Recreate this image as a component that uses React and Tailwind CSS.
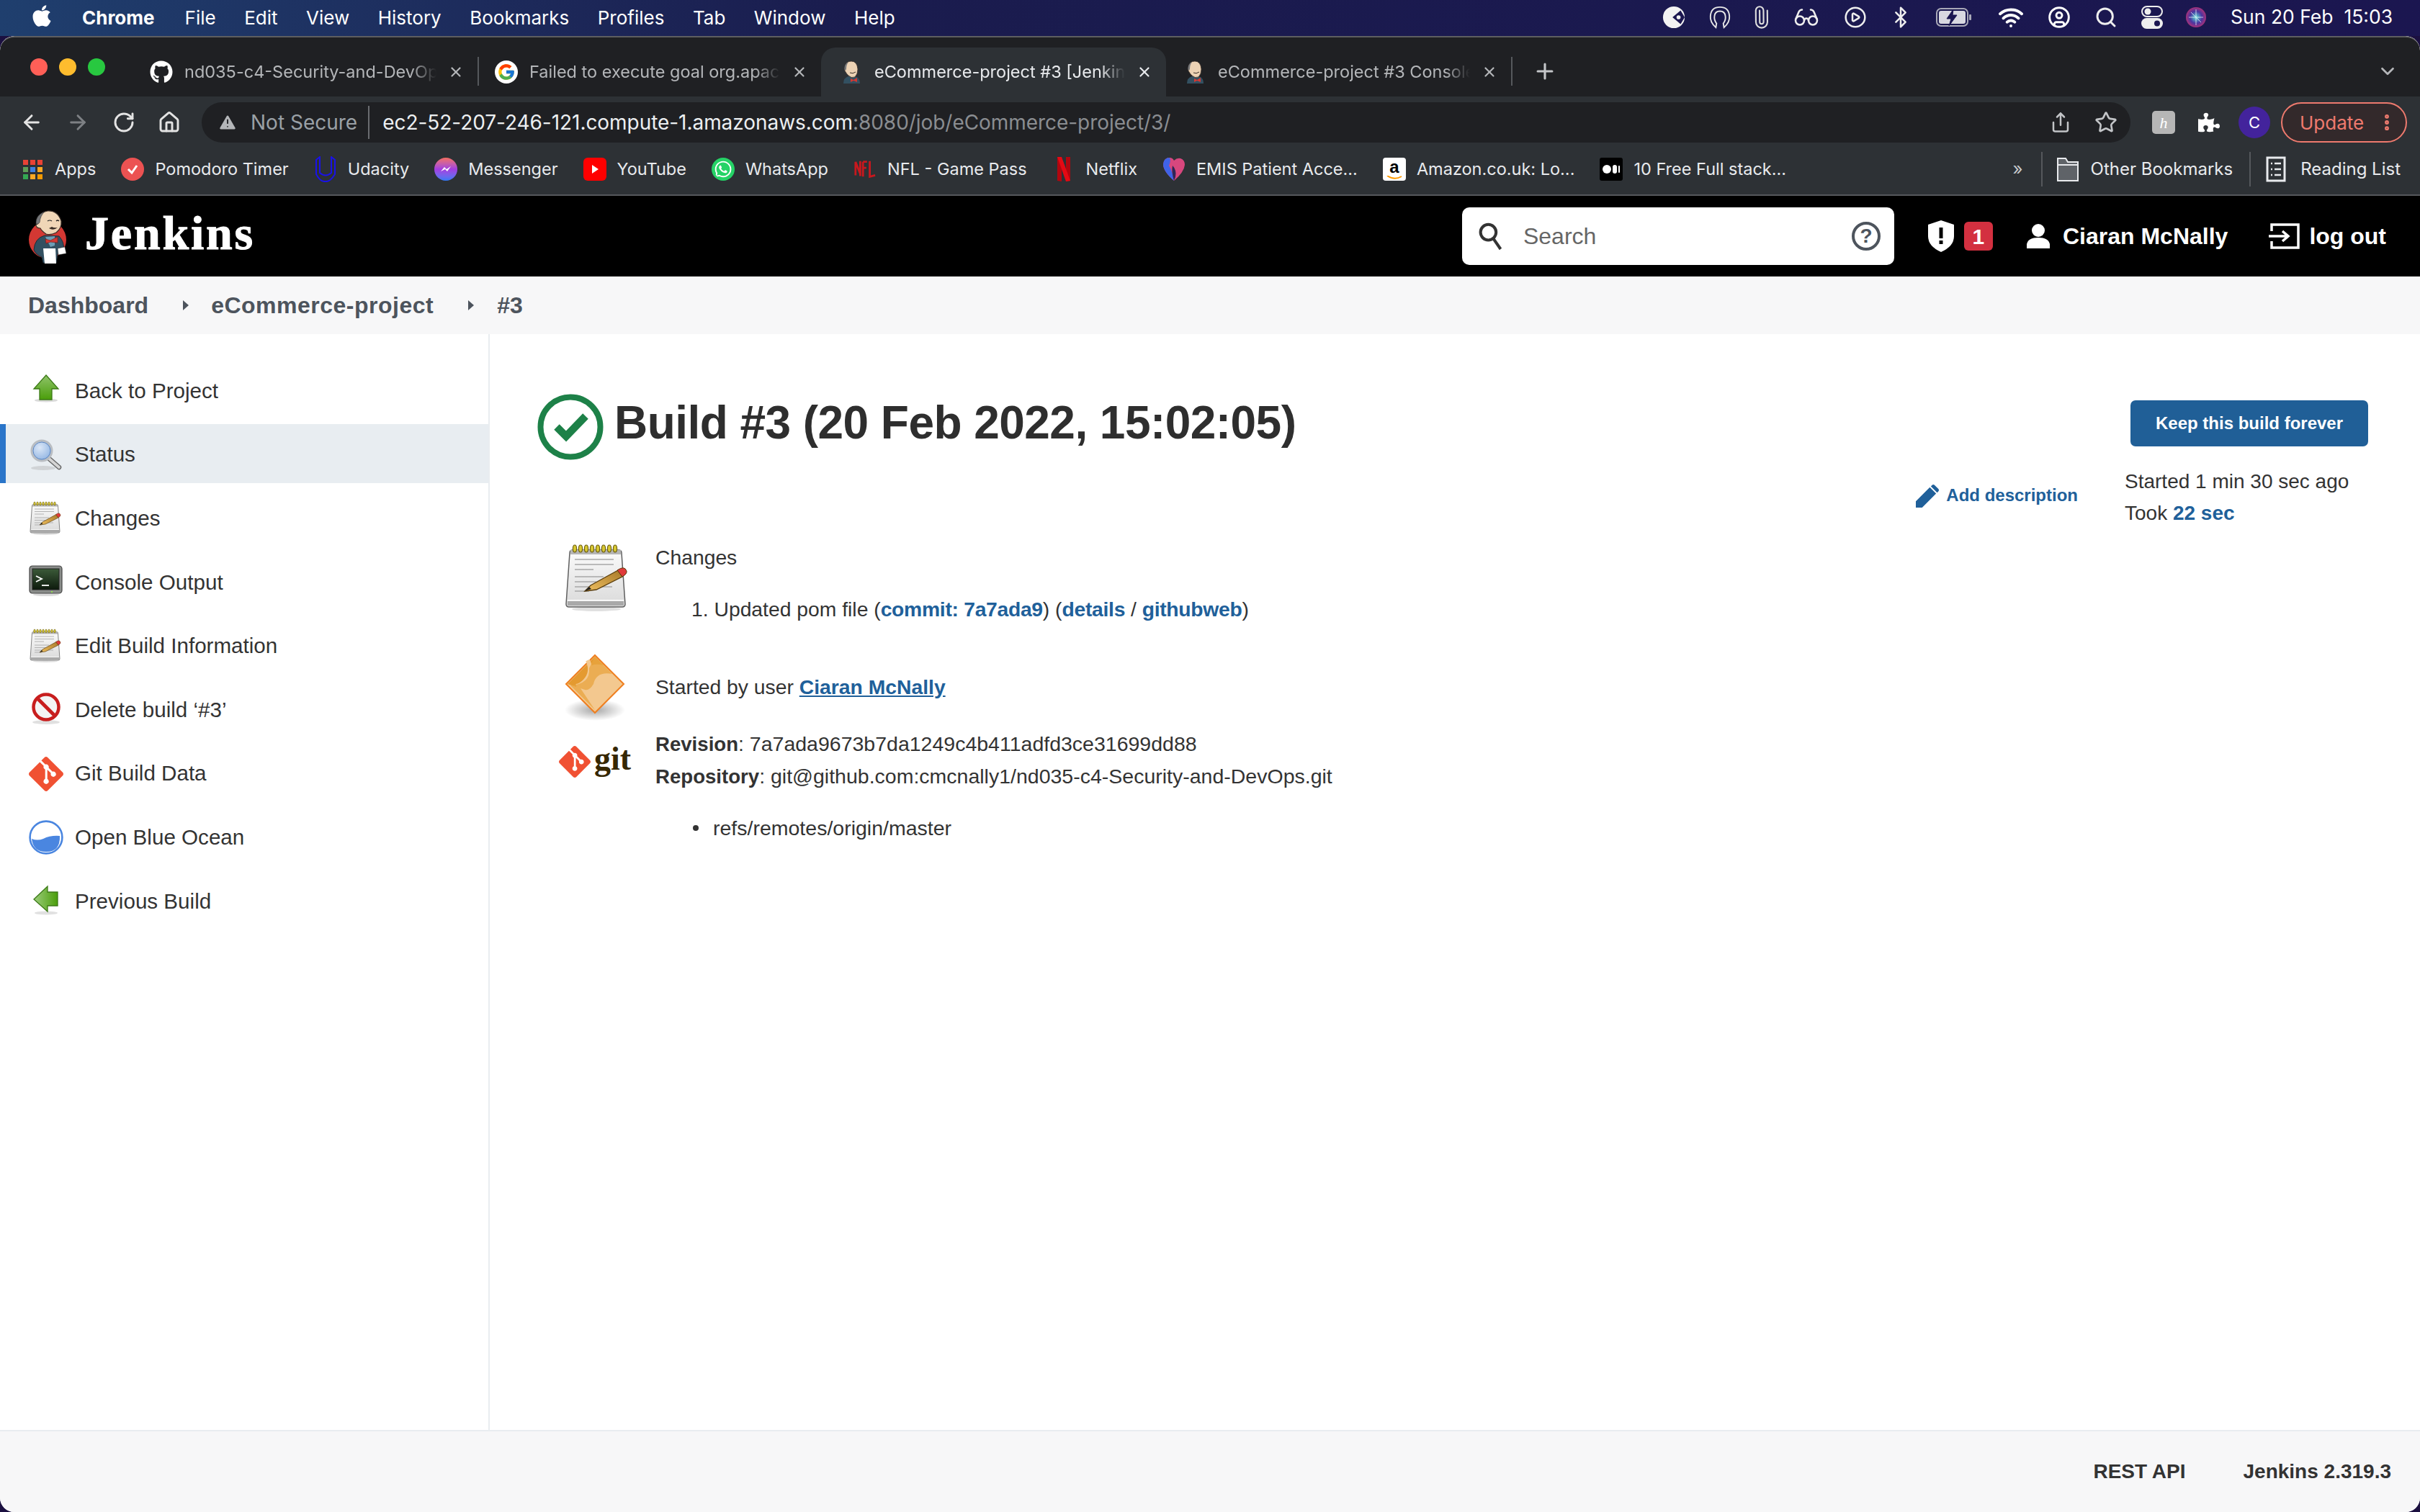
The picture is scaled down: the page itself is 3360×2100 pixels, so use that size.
import React from 'react';
import { FaApple, FaGithub, FaWhatsapp, FaPuzzlePiece } from 'react-icons/fa';
import { FcGoogle } from 'react-icons/fc';
import { SiGit } from 'react-icons/si';
import { ArrowLeft, ArrowRight, RotateCw, House, Paperclip, Glasses, CirclePlay, Bluetooth, Wifi, CircleUser, Search, Share, Star, ChevronDown, Plus, X, TriangleAlert, EllipsisVertical } from 'lucide-react';

function Butler({ className }) {
  return (
    <svg viewBox="0 0 100 95" className={className}>
      <circle cx="46" cy="52" r="26" fill="#d33833" />
      <path d="M27 66 Q28 50 42 46 L62 47 Q70 56 68 66 L60 72 L58 84 L40 84 L38 76 Q30 73 27 66Z" fill="#335061" stroke="#1d2d38" strokeWidth="1" />
      <path d="M43 48 L56 47 L56 60 L50 62 Z" fill="#6d9db5" />
      <path d="M43 51 L50 53 L60 48 L60 56 L50 55 L44 57 Z" fill="#d33833" stroke="#7a1c1a" strokeWidth=".7" />
      <path d="M40 64 H57 L58 85 H42 Z" fill="#ffffff" />
      <path d="M60 64 L70 62 L72 71 L61 73Z" fill="#ffffff" stroke="#222" strokeWidth=".5" />
      <path d="M32 30 Q33 14 46 12 Q60 11 65 26 Q66 36 58 42 Q50 46 44 44 Q38 40 36 36 Q30 36 30 31Z" fill="#f0d6b7" stroke="#3a2f28" strokeWidth="1.2" />
      <path d="M30 30 Q29 18 42 13 Q36 18 35 28 L33 30Z" fill="#77787a" stroke="#333" strokeWidth=".6" />
      <path d="M46 26 Q49 24 52 26 M58 26 Q60 24 62 26" stroke="#222" strokeWidth="1.2" fill="none" />
      <path d="M48 36 Q54 40 60 35 Q55 36 52 34 Z" fill="#3a2f28" />
    </svg>
  );
}

function SmallButler() {
  return (
    <svg viewBox="0 0 32 32" className="w-8 h-8 shrink-0">
      <path d="M5 32 Q5 24 12 22 L24 23 Q28 26 28 32Z" fill="#335061" />
      <path d="M15 25 L19 27 L24 24 L24 30 L19 28 L15 30Z" fill="#d33833" />
      <path d="M7 10 Q8 1 16 1 Q24 1 25 12 Q25 19 21 23 Q16 25 12 21 Q9 18 8 16 Q6 14 7 10Z" fill="#ecd2b4" stroke="#3a2f28" strokeWidth=".8" />
      <path d="M6.5 12 Q6 5 12 2 Q9 6 9 12 L8 14Z" fill="#77787a" />
      <path d="M14 17 Q18 19 22 16" stroke="#3a2f28" strokeWidth="1" fill="none" />
    </svg>
  );
}

function Notepad({ className }) {
  const rings = [16, 24, 32, 40, 48, 56, 64, 72];
  return (
    <svg viewBox="0 0 96 96" className={className}>
      <defs>
        <linearGradient id="np" x1="0" y1="0" x2="0" y2="1"><stop offset="0" stopColor="#fbfbfb" /><stop offset="1" stopColor="#d9d9d9" /></linearGradient>
        <linearGradient id="pn" x1="0" y1="1" x2="1" y2="0"><stop offset="0" stopColor="#f0c060" /><stop offset="1" stopColor="#a87a2a" /></linearGradient>
      </defs>
      <ellipse cx="46" cy="91" rx="34" ry="3" fill="#999" opacity=".3" />
      <path d="M13 9 H77 Q81 9 81 13 L86 84 Q86 88 82 88 H8 Q4 88 4 84 L9 13 Q9 9 13 9Z" fill="url(#np)" stroke="#5f5f5f" strokeWidth="1.5" />
      <rect x="10" y="9" width="70" height="6" fill="#b5b5b5" />
      <rect x="6" y="80" width="78" height="6" fill="#a9a9a9" />
      <rect x="6" y="78" width="78" height="1.5" fill="#ffffff" />
      {rings.map((x) => <ellipse key={x} cx={x} cy="7" rx="2.6" ry="5" fill="#d8c832" stroke="#6d5f10" strokeWidth="1.2" />)}
      <g stroke="#a8a8a8" strokeWidth="1.7">
        <path d="M16 22 H70 M16 29 H70 M16 36 H42 M16 46 H56 M16 53 H46 M16 60 H68 M16 66 H36" />
      </g>
      <path d="M30 66 L38 58 L76 37 L82 46 L46 64 Z" fill="url(#pn)" stroke="#5a3d0c" strokeWidth="1.3" />
      <path d="M75 37 Q85 30 88 38 Q89 42 82 46 Z" fill="#e03a3a" stroke="#5a3d0c" strokeWidth="1" />
      <path d="M30 66 L36 60 L39 63Z" fill="#222" />
    </svg>
  );
}

function UpArrow() {
  return (
    <svg viewBox="0 0 48 48" className="w-12 h-12">
      <defs><linearGradient id="ga" x1="0" y1="0" x2="0" y2="1"><stop offset="0" stopColor="#8fc36a" /><stop offset="1" stopColor="#4a9e0a" /></linearGradient></defs>
      <ellipse cx="24" cy="37" rx="16" ry="2.5" fill="#888" opacity=".3" />
      <path d="M24 2 L41 21 H32 V36 H15 V21 H7 Z" fill="url(#ga)" stroke="#3c7a17" strokeWidth="1.3" />
    </svg>
  );
}
function LeftArrow() {
  return (
    <svg viewBox="0 0 48 48" className="w-12 h-12">
      <defs><linearGradient id="gb" x1="1" y1="0" x2="0" y2="0"><stop offset="0" stopColor="#4a9e0a" /><stop offset="1" stopColor="#9ccc7c" /></linearGradient></defs>
      <ellipse cx="24" cy="40" rx="16" ry="2.5" fill="#888" opacity=".25" />
      <path d="M7 21 L26 3 V11 H40 V30 H26 V38 Z" fill="url(#gb)" stroke="#3c7a17" strokeWidth="1.3" />
    </svg>
  );
}
function Magnifier() {
  return (
    <svg viewBox="0 0 48 48" className="w-12 h-12">
      <defs><radialGradient id="gl" cx=".4" cy=".35" r=".7"><stop offset="0" stopColor="#dbe7f7" /><stop offset="1" stopColor="#8db2e2" /></radialGradient></defs>
      <ellipse cx="20" cy="42" rx="17" ry="3" fill="#999" opacity=".3" />
      <path d="M27 28 L42 41" stroke="#666" strokeWidth="6.5" strokeLinecap="round" />
      <path d="M27 28 L42 41" stroke="#d5d5d5" strokeWidth="3.8" strokeLinecap="round" />
      <circle cx="18" cy="18" r="14" fill="url(#gl)" stroke="#b9bdc2" strokeWidth="3" />
      <circle cx="18" cy="18" r="12" fill="none" stroke="#5d86c0" strokeWidth="1" />
    </svg>
  );
}
function Terminal() {
  return (
    <svg viewBox="0 0 48 48" className="w-12 h-12">
      <defs><linearGradient id="gt" x1="0" y1="0" x2="0" y2="1"><stop offset="0" stopColor="#3b5a38" /><stop offset="1" stopColor="#0d1a0d" /></linearGradient></defs>
      <ellipse cx="24" cy="41" rx="18" ry="2" fill="#888" opacity=".3" />
      <rect x="1" y="1" width="45" height="38" rx="4" fill="#8a8d8a" stroke="#444" strokeWidth="1.2" />
      <rect x="5" y="5" width="37" height="29" fill="url(#gt)" stroke="#222" />
      <path d="M10 15 L18 19 L10 23" fill="none" stroke="#fff" strokeWidth="1.8" />
      <path d="M18 28 H28" stroke="#fff" strokeWidth="1.8" />
      <rect x="31" y="36" width="2" height="2" fill="#8fe04e" />
    </svg>
  );
}
function NoEntry() {
  return (
    <svg viewBox="0 0 48 48" className="w-12 h-12">
      <ellipse cx="24" cy="41" rx="19" ry="3" fill="#999" opacity=".3" />
      <circle cx="24" cy="20" r="17.5" fill="#f4f4f4" stroke="#c81e1e" strokeWidth="4.5" />
      <path d="M13 9 L35 31" stroke="#c81e1e" strokeWidth="5" />
    </svg>
  );
}
function Ocean() {
  return (
    <svg viewBox="0 0 48 48" className="w-12 h-12">
      <circle cx="24" cy="24" r="22.4" fill="#fff" stroke="#4a86e0" strokeWidth="2.6" />
      <path d="M4 26 Q12 29 20 26 Q30 21 43 22 Q44 44 24 44 Q6 44 4 26Z" fill="#4a86e0" />
    </svg>
  );
}
function OrangeDiamond() {
  return (
    <svg viewBox="0 0 96 96" className="w-24 h-24">
      <defs><radialGradient id="sh"><stop offset="0" stopColor="#777" stopOpacity=".65" /><stop offset="1" stopColor="#777" stopOpacity="0" /></radialGradient></defs>
      <ellipse cx="48" cy="80" rx="42" ry="15" fill="url(#sh)" />
      <path d="M48 4 L88 44 L48 84 L8 44Z" fill="#f3c88f" stroke="#ef7e1f" strokeWidth="2" />
      <path d="M48 6 L60 18 Q44 14 40 22 Q44 36 22 48 L10 44Z" fill="#e49a30" />
      <path d="M38 11 Q46 28 34 40 Q28 46 22 47" fill="none" stroke="#f3c88f" strokeWidth="6" />
      <path d="M48 6 L86 44 L72 30 Q50 26 46 44 Q40 54 34 52 L28 50 L48 80 L30 62 L14 46 Q42 44 40 22Z" fill="#e8a43f" opacity=".75" />
    </svg>
  );
}
function BuildCheck() {
  return (
    <svg viewBox="0 0 92 92" className="w-[92px] h-[92px] shrink-0">
      <circle cx="46" cy="46" r="41.5" fill="none" stroke="#1d8148" strokeWidth="8" />
      <path d="M27 46 L40 59 L67 31" fill="none" stroke="#1d8148" strokeWidth="10.5" strokeLinejoin="miter" />
    </svg>
  );
}

const page = "font-['Liberation_Sans',sans-serif]";
const chrome = "font-['Inter',sans-serif]";

const menuItems = ['File', 'Edit', 'View', 'History', 'Bookmarks', 'Profiles', 'Tab', 'Window', 'Help'];

function MI({ children, w }) {
  return <span className="h-[50px] flex items-center justify-center shrink-0" style={{ width: w }}>{children}</span>;
}

function MenuBar() {
  return (
    <div className={`${chrome} h-[50px] pb-[2px] shrink-0 flex items-center text-white text-[26px] bg-linear-to-r from-[#1f3f6e] via-[#1a1c4e] via-35% to-[#1b1650]`}>
      <FaApple className="ml-[42px] w-[32px] h-[34px] mb-1" />
      <span className="ml-[40px] font-bold">Chrome</span>
      <div className="flex gap-[39.5px] ml-[42px]">
        {menuItems.map((m) => <span key={m}>{m}</span>)}
      </div>
      <div className="ml-auto flex items-center">
        <MI w={70}><svg viewBox="0 0 34 34" className="w-8 h-8"><circle cx="17" cy="17" r="16" fill="#f2f2f2" /><path d="M27 7 L15 17 L27 27 L33 17Z" fill="#1b1650" /><circle cx="24" cy="17" r="3" fill="#f2f2f2" /></svg></MI>
        <MI w={58}><svg viewBox="0 0 34 34" className="w-8 h-8" fill="none" stroke="#e8e8e8" strokeWidth="2"><path d="M11 32 Q2 24 3 15 Q4 2 17 2 Q30 2 31 15 Q32 24 23 32 L22 26 Q26 21 25 15 Q24 8 17 8 Q10 8 9 15 Q8 21 12 26Z" /></svg></MI>
        <MI w={56}><Paperclip className="w-8 h-8 text-[#ddd] -rotate-45" strokeWidth={1.6} /></MI>
        <MI w={70}><Glasses className="w-9 h-9 text-[#eee]" strokeWidth={1.7} /></MI>
        <MI w={66}><CirclePlay className="w-8 h-8 text-[#eee]" strokeWidth={1.9} /></MI>
        <MI w={60}><Bluetooth className="w-8 h-8 text-[#eee]" strokeWidth={1.9} /></MI>
        <MI w={88}><svg viewBox="0 0 50 28" className="w-[50px] h-7"><rect x="1" y="2" width="43" height="24" rx="6" fill="none" stroke="#a9a9b8" strokeWidth="2" /><rect x="4" y="5" width="37" height="18" rx="3" fill="#d8d8e0" /><path d="M24 3 L15 16 H21 L18 26 L29 11 H23Z" fill="#1b1650" stroke="#1b1650" /><rect x="46" y="10" width="3" height="8" rx="1" fill="#a9a9b8" /></svg></MI>
        <MI w={70}><Wifi className="w-9 h-9 text-white" strokeWidth={2.6} /></MI>
        <MI w={64}><CircleUser className="w-8 h-8 text-white" strokeWidth={2.2} /></MI>
        <MI w={66}><Search className="w-8 h-8 text-[#eee]" strokeWidth={2.2} /></MI>
        <MI w={62}><svg viewBox="0 0 30 34" className="w-[30px] h-[34px]"><rect x="1" y="2" width="28" height="14" rx="7" fill="none" stroke="#eee" strokeWidth="2" /><circle cx="9" cy="9" r="4.5" fill="#eee" /><rect x="0" y="18" width="30" height="15" rx="7.5" fill="#eee" /><circle cx="22" cy="25.5" r="4" fill="#1b1650" /></svg></MI>
        <MI w={60}><svg viewBox="0 0 30 30" className="w-[30px] h-[34px]"><defs><radialGradient id="sr"><stop offset="0" stopColor="#5ce0d8" /><stop offset=".6" stopColor="#4a35a0" /><stop offset="1" stopColor="#a8327a" /></radialGradient></defs><circle cx="15" cy="15" r="14" fill="url(#sr)" /><path d="M15 4 L15 26 M5 15 L25 15 M8 8 L22 22" stroke="#fff" strokeWidth="1" opacity=".7" /></svg></MI>
        <span className="ml-[18px] mr-[38px] text-[26.5px] text-white whitespace-nowrap">Sun 20 Feb&nbsp;&nbsp;15:03</span>
      </div>
    </div>
  );
}

function Tab({ w, active, icon, title, pl = 22 }) {
  return (
    <div style={{ width: w, paddingLeft: pl }} className={`shrink-0 flex items-center gap-4 pr-[19px] h-[68px] self-end ${active ? 'bg-[#2d3135] rounded-t-[20px] text-[#e8eaed]' : 'text-[#b4b6b9]'}`}>
      {icon}
      <span className="flex-1 overflow-hidden whitespace-nowrap text-[23.5px] [mask-image:linear-gradient(to_right,black_90%,transparent)]">{title}</span>
      <X className="w-[22px] h-[22px] shrink-0" strokeWidth={2.4} />
    </div>
  );
}

function TabStrip() {
  const sep = <span className="w-[2px] h-10 bg-[#55585c] shrink-0 self-center mt-[12px]" />;
  return (
    <div className={`${chrome} h-[84px] shrink-0 flex bg-[#1f2023] border-t-2 border-[#5d5e60] rounded-t-[20px]`}>
      <div className="flex items-center gap-4 pl-[42px] w-[186px] shrink-0">
        <span className="w-6 h-6 rounded-full bg-[#ff5f57]" />
        <span className="w-6 h-6 rounded-full bg-[#febc2e]" />
        <span className="w-6 h-6 rounded-full bg-[#28c840]" />
      </div>
      <Tab w={477} icon={<FaGithub className="w-8 h-8 text-white shrink-0" />} title="nd035-c4-Security-and-DevOps" />
      {sep}
      <Tab w={475} icon={<span className="w-8 h-8 rounded-full bg-white flex items-center justify-center shrink-0"><FcGoogle className="w-[26px] h-[26px]" /></span>} title="Failed to execute goal org.apache" />
      <Tab w={479} pl={26} active icon={<SmallButler />} title="eCommerce-project #3 [Jenkins]" />
      <Tab w={479} pl={24} icon={<SmallButler />} title="eCommerce-project #3 Console" />
      {sep}
      <Plus className="w-[34px] h-[34px] ml-[28px] self-center mt-[12px] text-[#c4c6c9]" strokeWidth={2.2} />
      <ChevronDown className="ml-auto mr-[30px] self-center mt-[12px] w-[30px] h-[30px] text-[#b4b6b9]" strokeWidth={2.2} />
    </div>
  );
}

function Toolbar() {
  return (
    <div className={`${chrome} h-[66px] shrink-0 bg-[#2d3135] flex items-center`}>
      <div className="w-[280px] flex items-center shrink-0 mt-[6px]">
        <ArrowLeft className="w-8 h-8 text-[#e3e3e3] ml-[28px]" strokeWidth={2.2} />
        <ArrowRight className="w-8 h-8 text-[#7d8084] ml-[32px]" strokeWidth={2.2} />
        <RotateCw className="w-8 h-8 text-[#e3e3e3] ml-[32px]" strokeWidth={2.2} />
        <House className="w-8 h-8 text-[#e3e3e3] ml-[31px]" strokeWidth={2.2} />
      </div>
      <div className="w-[2678px] h-[56px] mt-[6px] rounded-full bg-[#1f2023] flex items-center shrink-0">
        <TriangleAlert className="ml-[22px] w-7 h-7 text-[#b4b6b9] fill-[#b4b6b9] stroke-[#1f2023]" strokeWidth={1.6} />
        <span className="ml-[18px] text-[28px] text-[#9aa0a6] whitespace-nowrap">Not Secure</span>
        <span className="ml-[15px] w-[2px] h-[46px] bg-[#6a6c70]" />
        <span className="ml-[18px] text-[28px] tracking-[-0.05px] whitespace-nowrap text-[#eceff1]">ec2-52-207-246-121.compute-1.amazonaws.com<span className="text-[#8a8d91]">:8080/job/eCommerce-project/3/</span></span>
        <Share className="ml-auto w-[30px] h-[30px] text-[#c2c4c7]" strokeWidth={2} />
        <Star className="ml-[32px] mr-[18px] w-[32px] h-[32px] text-[#c2c4c7]" strokeWidth={2} />
      </div>
      <span className="ml-[30px] w-8 h-8 rounded-[5px] bg-[#b6b6b6] text-white text-[22px] italic flex items-center justify-center shrink-0 mt-[6px] font-['Liberation_Serif',serif]">h</span>
      <FaPuzzlePiece className="ml-[32px] w-[30px] h-[30px] text-white shrink-0 mt-[6px]" />
      <span className="ml-[26px] w-[44px] h-[44px] rounded-full bg-[#43239c] text-white text-[22px] flex items-center justify-center shrink-0 mt-[6px]">C</span>
      <div className="ml-[15px] w-[175px] h-[56px] rounded-full border-2 border-[#ee7a6e] bg-[#33292b] text-[#ee7a6e] text-[26px] flex items-center pl-[24px] shrink-0 mt-[6px]">
        Update
        <EllipsisVertical className="ml-auto mr-[12px] w-7 h-7 text-[#ee7a6e]" strokeWidth={3} />
      </div>
    </div>
  );
}

function BM({ icon, label, mr = 33 }) {
  return (
    <div className="flex items-center shrink-0" style={{ marginRight: mr }}>
      <span className="w-9 h-9 flex items-center justify-center shrink-0">{icon}</span>
      <span className="ml-[13px] whitespace-nowrap">{label}</span>
    </div>
  );
}

function Bookmarks() {
  return (
    <div className={`${chrome} h-[72px] shrink-0 bg-[#2d3135] border-b-2 border-[#55585c] text-[23.5px] text-[#e8eaed] flex items-center pl-[27px]`}>
      <BM label="Apps" icon={<svg viewBox="0 0 27 27" className="w-[27px] h-[27px]">{[['#e94235','#e94235','#e94235'],['#5f9e57','#3f7fe0','#f9a825'],['#34a853','#f9a825','#f29900']].map((r, i) => r.map((c, j) => <rect key={`${i}${j}`} x={j * 10} y={i * 10} width="7" height="7" fill={c} />))}</svg>} />
      <BM label="Pomodoro Timer" icon={<span className="w-8 h-8 rounded-full bg-[#ec5252] flex items-center justify-center"><svg viewBox="0 0 20 20" className="w-5 h-5"><path d="M4 10 L9 15 L16 5" fill="none" stroke="#fff" strokeWidth="3" /></svg></span>} />
      <BM label="Udacity" icon={<svg viewBox="0 0 32 36" className="w-8 h-9"><path d="M3 5 L8 1 V23 Q16 30 24 23 V1 L29 5 V25 Q22 36 16 35 Q9 36 3 25Z" fill="none" stroke="#1a12e8" strokeWidth="2" /></svg>} />
      <BM label="Messenger" icon={<span className="w-8 h-8 rounded-full flex items-center justify-center bg-linear-to-t from-[#2b78f5] via-[#a33be0] to-[#f56c5c]"><svg viewBox="0 0 20 20" className="w-5 h-5"><path d="M3 13 L8 7 L11 10 L17 6 L12 13 L9 10Z" fill="#fff" /></svg></span>} />
      <BM label="YouTube" icon={<span className="w-8 h-8 rounded-[6px] bg-[#f00] flex items-center justify-center"><svg viewBox="0 0 12 12" className="w-3 h-3"><path d="M2 0 L11 6 L2 12Z" fill="#fff" /></svg></span>} />
      <BM label="WhatsApp" icon={<FaWhatsapp className="w-8 h-8 text-[#fff] bg-[#25d366] rounded-full p-[3px]" />} />
      <BM label="NFL - Game Pass" icon={<svg viewBox="0 0 34 34" className="w-8 h-8"><path d="M3 6 V26 M3 6 L10 24 M10 5 V27 M14 6 V28 M14 6 H20 M14 15 H19 M24 5 V28 L32 26" stroke="#c8181e" strokeWidth="3" fill="none" /></svg>} />
      <BM label="Netflix" icon={<svg viewBox="0 0 20 34" className="w-[20px] h-[34px]"><path d="M1 0 H7 V34 L1 33Z M13 0 H19 V33 L13 34Z" fill="#b1060f" /><path d="M1 0 H7 L19 33 L13 34Z" fill="#e50914" /></svg>} />
      <BM label="EMIS Patient Acce..." icon={<svg viewBox="0 0 32 34" className="w-8 h-[34px]"><path d="M16 33 Q1 20 1 10 Q2 1 10 1 Q14 1 16 5 Q20 1 25 2 Q31 4 31 11 Q30 21 16 33Z" fill="#d8477e" /><path d="M16 33 Q1 20 1 10 Q2 1 10 1 Q12 6 9 12 Q14 20 16 33Z" fill="#3f63e8" /><path d="M16 33 Q12 20 14 12 Q20 18 18 28Z" fill="#2f2556" /></svg>} />
      <BM label="Amazon.co.uk: Lo..." icon={<span className="w-8 h-8 rounded-[4px] bg-white flex flex-col items-center justify-center text-black font-bold text-[24px] leading-none font-['Liberation_Sans',sans-serif]">a<svg viewBox="0 0 24 6" className="w-6 h-[6px]"><path d="M2 0 Q12 7 22 1" fill="none" stroke="#f90" strokeWidth="2" /></svg></span>} />
      <BM label="10 Free Full stack..." icon={<span className="w-8 h-8 rounded-[3px] bg-black flex items-center justify-center gap-[2px]"><span className="w-3 h-3 rounded-full bg-white" /><span className="w-[6px] h-3 rounded-full bg-white" /><span className="w-[2px] h-[10px] rounded-full bg-white" /></span>} mr={0} />
      <span className="ml-auto text-[24px] text-[#c8cacd]">»</span>
      <span className="ml-[25px] w-[2px] h-[48px] bg-[#55585c]" />
      <svg viewBox="0 0 32 36" className="ml-[19px] w-[32px] h-[36px]"><path d="M2 3 H13 L16 8 H30 V34 H2Z" fill="#5f6368" stroke="#e8eaed" strokeWidth="2" /><path d="M2 12 H30" stroke="#e8eaed" strokeWidth="2" /></svg>
      <span className="ml-[16px] text-[24px] whitespace-nowrap">Other Bookmarks</span>
      <span className="ml-[23px] w-[2px] h-[48px] bg-[#55585c]" />
      <svg viewBox="0 0 28 36" className="ml-[21px] w-[28px] h-[36px]"><rect x="2" y="2" width="24" height="32" fill="none" stroke="#e8eaed" strokeWidth="3" /><path d="M7 10 H9 M12 10 H21 M7 18 H9 M12 18 H21 M7 26 H9 M12 26 H21" stroke="#e8eaed" strokeWidth="2.5" /></svg>
      <span className="ml-[20px] mr-[27px] text-[24px] whitespace-nowrap">Reading List</span>
    </div>
  );
}

function JenkinsHeader() {
  return (
    <header className={`${page} h-[112px] shrink-0 bg-black text-white flex items-center pl-[20px]`}>
      <Butler className="w-[100px] h-[95px]" />
      <span className="font-['Liberation_Serif',serif] font-bold text-[66px] leading-none tracking-[2.8px] -ml-[2px] -mt-2 [-webkit-text-stroke:1px_white]">Jenkins</span>
      <div className="ml-auto w-[600px] h-[80px] bg-white rounded-[10px] flex items-center text-[32px] text-[#666]">
        <svg viewBox="0 0 40 44" className="ml-[22px] w-[36px] h-[42px]" fill="none" stroke="#333" strokeWidth="4.5"><circle cx="16" cy="16" r="12" /><path d="M24 26 L35 42" /></svg>
        <span className="ml-[27px]">Search</span>
        <span className="ml-auto mr-[19px] w-[40px] h-[40px] rounded-full border-[4px] border-[#4d545d] text-[#4d545d] text-[28px] font-bold flex items-center justify-center leading-none">?</span>
      </div>
      <svg viewBox="0 0 36 44" className="ml-[47px] w-[36px] h-[44px]"><path d="M18 0 L36 6 V22 Q36 36 18 44 Q0 36 0 22 V6Z" fill="#fff" /><rect x="15.5" y="10" width="5" height="15" fill="#000" /><rect x="15.5" y="28" width="5" height="5" fill="#000" /></svg>
      <span className="ml-[14px] w-[40px] h-[40px] rounded-[6px] bg-[#d33040] text-[30px] font-bold flex items-center justify-center">1</span>
      <svg viewBox="0 0 32 34" className="ml-[47px] w-[32px] h-[34px]" fill="#fff"><circle cx="16" cy="9" r="9" /><path d="M0 34 V28 Q2 19 16 19 Q30 19 32 28 V34Z" /></svg>
      <span className="ml-[18px] font-bold text-[32px] whitespace-nowrap">Ciaran McNally</span>
      <svg viewBox="0 0 44 38" className="ml-[57px] w-[44px] h-[38px]" fill="none" stroke="#fff" strokeWidth="3.5"><path d="M4 12 V3 H41 V35 H4 V26" /><path d="M0 19 H26 M19 12 L27 19 L19 26" /></svg>
      <span className="ml-[12px] mr-[47px] font-bold text-[32px] whitespace-nowrap">log out</span>
    </header>
  );
}

function Breadcrumb() {
  const arrow = <svg viewBox="0 0 8 14" className="w-2 h-[14px]"><path d="M0 0 L8 7 L0 14Z" fill="#4d545d" /></svg>;
  return (
    <nav className={`${page} h-[80px] shrink-0 bg-[#f7f7f8] flex items-center pl-[39px] text-[32px] font-bold text-[#4d545d] whitespace-nowrap`}>
      <span>Dashboard</span>
      <span className="ml-[48px]">{arrow}</span>
      <span className="ml-[31px] tracking-[0.5px]">eCommerce-project</span>
      <span className="ml-[48px]">{arrow}</span>
      <span className="ml-[32px]">#3</span>
    </nav>
  );
}

const sideItems = [
  ['Back to Project', <UpArrow />],
  ['Status', <Magnifier />, true],
  ['Changes', <Notepad className="w-12 h-12" />],
  ['Console Output', <Terminal />],
  ['Edit Build Information', <Notepad className="w-12 h-12" />],
  ['Delete build ‘#3’', <NoEntry />],
  ['Git Build Data', <SiGit className="w-12 h-12 text-[#f05133]" />],
  ['Open Blue Ocean', <Ocean />],
  ['Previous Build', <LeftArrow />],
];

function Sidebar() {
  return (
    <aside className="w-[680px] shrink-0 border-r-2 border-[#e9edf0] pt-[36px] flex flex-col gap-[6.6px]">
      {sideItems.map(([label, icon, active]) => (
        <div key={label} className={`h-[82px] pt-[4px] flex items-center gap-4 pl-[32px] border-l-8 text-[29.6px] text-[#333] ${active ? 'bg-[#e8edf1] border-[#2a75c9]' : 'border-transparent'}`}>
          <span className="w-12 h-12 shrink-0 flex items-center justify-center">{icon}</span>
          {label}
        </div>
      ))}
    </aside>
  );
}

const link = 'font-bold text-[#20609a]';
const tightLink = 'font-bold text-[#20609a] tracking-[-0.3px]';

function Main() {
  return (
    <main className="flex-1 pl-[66px] pr-[72px] pt-[83px] text-[28px] text-[#333] leading-[44px]">
      <div className="flex items-start justify-between">
        <h1 className="flex items-center gap-[15px] text-[64px] font-bold text-[#2e2e2e] leading-[92px] whitespace-nowrap tracking-[-0.55px]">
          <BuildCheck />
          <span className="-mt-[12px]">Build #3 (20 Feb 2022, 15:02:05)</span>
        </h1>
        <button className="mt-[9px] w-[330px] h-[64px] rounded-[7px] bg-[#205f97] text-white text-[24px] font-bold">Keep this build forever</button>
      </div>
      <div className="mt-2 flex justify-end gap-[65px]">
        <div className="flex items-center gap-[9px] h-[34px] mt-[24px] text-[24px] font-bold text-[#20609a]">
          <svg viewBox="0 0 34 34" className="w-[33px] h-[33px]"><path d="M0 34 V25 L20 5 L29 14 L9 34Z M23 2 Q25 0 27 2 L32 7 Q34 9 32 11 L30.5 12.5 L21.5 3.5Z" fill="#20609a" /></svg>
          Add description
        </div>
        <div className="w-[338px] shrink-0">
          <div>Started 1 min 30 sec ago</div>
          <div>Took <span className={link}>22 sec</span></div>
        </div>
      </div>
      <div className="text-[28.3px]">
        <div className="mt-[17px] ml-[30px] flex">
          <div className="w-[134px] shrink-0 pl-[6px] pt-[3px]"><Notepad className="w-24 h-24" /></div>
          <div>
            <div>Changes</div>
            <div className="mt-[28px] pl-[50px]">1.&nbsp;Updated pom file (<span className={tightLink}>commit: 7a7ada9</span>) (<span className={tightLink}>details</span> / <span className={tightLink}>githubweb</span>)</div>
          </div>
        </div>
        <div className="mt-[38px] ml-[30px] flex items-center">
          <div className="w-[134px] shrink-0 pl-[2px]"><OrangeDiamond /></div>
          <div>Started by user <span className={`${link} underline`}>Ciaran McNally</span></div>
        </div>
        <div className="mt-[9px] ml-[30px] flex">
          <div className="w-[134px] shrink-0 flex items-center gap-[5px] h-[48px] mt-[23px]">
            <SiGit className="w-[44px] h-[44px] text-[#f05133]" />
            <span className="font-['Liberation_Serif',serif] font-bold text-[46px] leading-none text-[#362701] -mt-[8px]">git</span>
          </div>
          <div className="text-[28.5px]">
            <div><b className="text-[27.6px]">Revision</b>: 7a7ada9673b7da1249c4b411adfd3ce31699dd88</div>
            <div><b className="text-[27.6px]">Repository</b>: git@github.com:cmcnally1/nd035-c4-Security-and-DevOps.git</div>
            <div className="mt-[27px] pl-[52px] flex items-center gap-[20px]"><span className="w-2 h-2 rounded-full bg-[#333]" />refs/remotes/origin/master</div>
          </div>
        </div>
      </div>
    </main>
  );
}

function Footer() {
  return (
    <footer className="h-[114px] shrink-0 bg-[#f7f7f8] border-t-2 border-[#e9edf0] flex items-center justify-end gap-[80px] pr-[40px] text-[28px] font-bold text-[#333]">
      <span>REST API</span>
      <span>Jenkins 2.319.3</span>
    </footer>
  );
}

export default function App() {
  return (
    <div className="w-[3360px] h-[2100px] overflow-hidden flex flex-col bg-[#1b1040]">
      <MenuBar />
      <div className="flex-1 min-h-0 flex flex-col rounded-[20px] overflow-hidden bg-white">
        <TabStrip />
        <Toolbar />
        <Bookmarks />
        <div className={`${page} flex-1 min-h-0 flex flex-col`}>
          <JenkinsHeader />
          <Breadcrumb />
          <div className="flex-1 min-h-0 flex">
            <Sidebar />
            <Main />
          </div>
          <Footer />
        </div>
      </div>
    </div>
  );
}
